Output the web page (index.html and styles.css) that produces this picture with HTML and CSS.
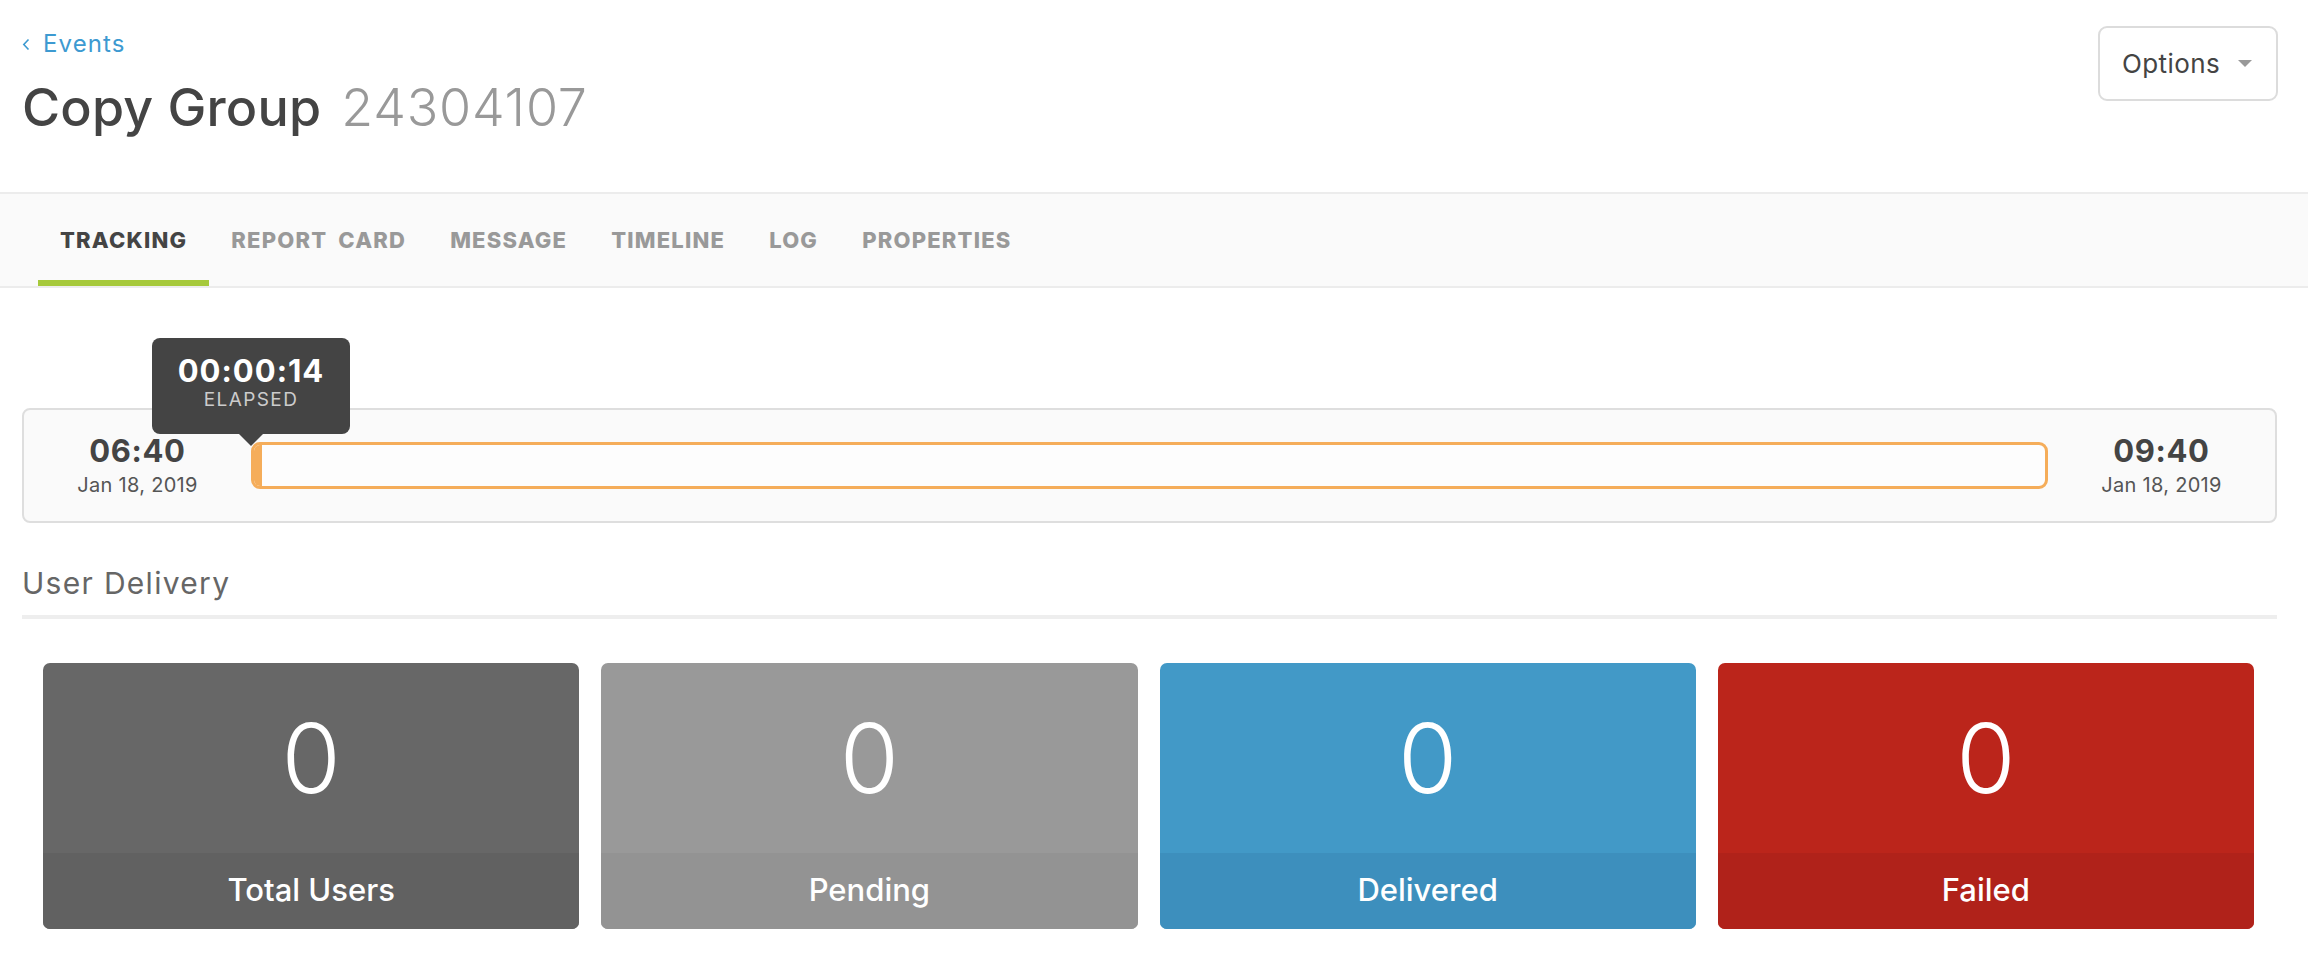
FILE: index.html
```html
<!DOCTYPE html>
<html lang="en">
<head>
<meta charset="utf-8">
<title>Copy Group 24304107</title>
<link rel="stylesheet" href="styles.css">
</head>
<body>
<header class="page-header">
  <div class="titles">
    <a class="back" href="#">
      <svg class="back-icon" width="8" height="13" viewBox="0 0 8 13"><polyline points="6.5,1.5 1.8,6.5 6.5,11.5" fill="none" stroke="#3d9ad1" stroke-width="1.6"/></svg>
      <span>Events</span>
    </a>
    <h1 class="title"><span class="title-name">Copy Group</span><span class="title-id">24304107</span></h1>
  </div>
  <button class="options">Options <span class="caret"></span></button>
</header>

<nav class="tabs">
  <a class="tab active" href="#">TRACKING</a>
  <a class="tab" href="#">REPORT CARD</a>
  <a class="tab" href="#">MESSAGE</a>
  <a class="tab" href="#">TIMELINE</a>
  <a class="tab" href="#">LOG</a>
  <a class="tab" href="#">PROPERTIES</a>
</nav>

<main class="content">
  <section class="timeline">
    <div class="time-block">
      <div class="time">06:40</div>
      <div class="date">Jan 18, 2019</div>
    </div>
    <div class="bar">
      <div class="bar-fill"></div>
      <div class="tooltip">
        <div class="tooltip-value">00:00:14</div>
        <div class="tooltip-label">ELAPSED</div>
      </div>
    </div>
    <div class="time-block">
      <div class="time">09:40</div>
      <div class="date">Jan 18, 2019</div>
    </div>
  </section>

  <h2 class="section-title">User Delivery</h2>

  <section class="cards">
    <div class="card card-total">
      <div class="card-value">0</div>
      <div class="card-label">Total Users</div>
    </div>
    <div class="card card-pending">
      <div class="card-value">0</div>
      <div class="card-label">Pending</div>
    </div>
    <div class="card card-delivered">
      <div class="card-value">0</div>
      <div class="card-label">Delivered</div>
    </div>
    <div class="card card-failed">
      <div class="card-value">0</div>
      <div class="card-label">Failed</div>
    </div>
  </section>
</main>
</body>
</html>
```

FILE: styles.css
```css
* { box-sizing: border-box; }

html, body {
  margin: 0;
  padding: 0;
  background: #fff;
  font-family: "Inter", "Noto Sans", "Liberation Sans", sans-serif;
  color: #444;
}

/* Header */
.page-header {
  display: flex;
  justify-content: space-between;
  align-items: flex-start;
  height: 194px;
  padding: 26px 30px 0 22px;
  border-bottom: 2px solid #ececec;
}

.titles {
  display: flex;
  flex-direction: column;
}

.back {
  display: flex;
  align-items: center;
  gap: 13px;
  color: #3d9ad1;
  text-decoration: none;
  font-size: 24px;
  line-height: 32px;
  letter-spacing: 1.1px;
  margin-top: 2px;
}

.back-icon { margin-top: 1px; }

.title {
  margin: 18px 0 0 0;
  font-size: 52px;
  line-height: 60px;
  font-weight: 500;
  color: #444;
  display: flex;
  gap: 20px;
  letter-spacing: 0.2px;
}

.title-id {
  font-weight: 300;
  color: #999;
  letter-spacing: 0.8px;
}

.options {
  display: flex;
  align-items: center;
  gap: 18px;
  width: 180px;
  height: 75px;
  padding: 0 0 0 22px;
  background: #fff;
  border: 2px solid #dcdcdc;
  border-radius: 9px;
  font-family: inherit;
  font-size: 26px;
  letter-spacing: 0.4px;
  color: #444;
}

.caret {
  width: 0;
  height: 0;
  border-left: 7px solid transparent;
  border-right: 7px solid transparent;
  border-top: 7px solid #999;
}

/* Tabs */
.tabs {
  display: flex;
  height: 94px;
  padding-left: 38px;
  background: #fafafa;
  border-bottom: 2px solid #ececec;
}

.tab {
  display: flex;
  align-items: center;
  padding: 6px 22px 0;
  border-bottom: 6px solid transparent;
  font-size: 22px;
  font-weight: 800;
  color: #999;
  text-decoration: none;
  letter-spacing: 1.2px;
  word-spacing: 5px;
}

.tab.active {
  color: #444;
  border-bottom-color: #a6c93b;
}

/* Content */
.content {
  padding: 0 31px 0 22px;
}

.timeline {
  display: flex;
  align-items: center;
  height: 115px;
  margin-top: 120px;
  background: #fafafa;
  border: 2px solid #dedede;
  border-radius: 8px;
}

.time-block {
  width: 227px;
  flex: none;
  text-align: center;
}

.time {
  font-size: 31px;
  font-weight: 700;
  line-height: 36px;
  letter-spacing: 0.6px;
  color: #444;
}

.date {
  font-size: 20px;
  line-height: 28px;
  letter-spacing: 0.3px;
  color: #555;
  margin-top: 2px;
}

.bar {
  position: relative;
  flex: 1;
  height: 47px;
  border: 3px solid #f5ad5a;
  border-radius: 9px;
  background: #fdfdfd;
}

.bar-fill {
  width: 8px;
  height: 100%;
  background: #f5ad5a;
  border-radius: 6px 0 0 6px;
}

.tooltip {
  position: absolute;
  left: -3px;
  bottom: calc(100% + 11px);
  transform: translateX(-50%);
  width: 198px;
  height: 96px;
  padding-top: 16px;
  background: #444;
  border-radius: 8px;
  text-align: center;
}

.tooltip::after {
  content: "";
  position: absolute;
  left: 50%;
  top: 100%;
  margin-left: -12px;
  border-left: 12px solid transparent;
  border-right: 12px solid transparent;
  border-top: 12px solid #444;
}

.tooltip-value {
  font-size: 31px;
  font-weight: 700;
  line-height: 34px;
  letter-spacing: 1px;
  color: #fff;
}

.tooltip-label {
  font-size: 19px;
  line-height: 24px;
  color: #ccc;
  letter-spacing: 1.4px;
}

.section-title {
  margin: 42px 0 0 0;
  padding-bottom: 14px;
  font-size: 30px;
  line-height: 36px;
  font-weight: 400;
  letter-spacing: 1.3px;
  color: #666;
  border-bottom: 4px solid #eee;
}

.cards {
  display: grid;
  grid-template-columns: repeat(4, 1fr);
  gap: 22px;
  padding: 0 23px 0 21px;
  margin-top: 44px;
}

.card {
  display: flex;
  flex-direction: column;
  height: 266px;
  border-radius: 7px;
  overflow: hidden;
  color: #fff;
  text-align: center;
}

.card-value {
  flex: 1;
  display: flex;
  align-items: center;
  justify-content: center;
  font-size: 96px;
  font-weight: 300;
}

.card-label {
  height: 76px;
  display: flex;
  align-items: center;
  justify-content: center;
  padding-bottom: 3px;
  font-size: 31px;
  font-weight: 500;
}

.card-total { background: #676767; }
.card-total .card-label { background: #616161; }
.card-pending { background: #999; }
.card-pending .card-label { background: #939393; }
.card-delivered { background: #4299c7; }
.card-delivered .card-label { background: #3d8fbd; }
.card-failed { background: #bb251b; }
.card-failed .card-label { background: #b0221a; }
```
